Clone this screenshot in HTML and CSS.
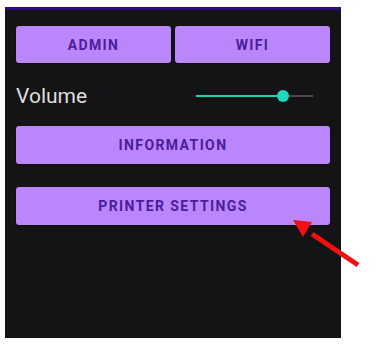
FILE: index.html
```html
<!DOCTYPE html>
<html>
<head>
<meta charset="utf-8">
<link rel="stylesheet" href="styles.css">
</head>
<body>
<div class="stage">
  <div class="panel">
    <div class="row-2">
      <button class="btn">ADMIN</button>
      <button class="btn">WIFI</button>
    </div>
    <div class="volume-row">
      <span class="label">Volume</span>
      <div class="slider">
        <div class="track-active"></div>
        <div class="thumb"></div>
        <div class="track-rest"></div>
      </div>
    </div>
    <button class="btn btn-wide info">INFORMATION</button>
    <button class="btn btn-wide printer">PRINTER SETTINGS</button>
  </div>
  <svg class="arrow" width="80" height="60" viewBox="0 0 80 60">
    <line x1="68" y1="50" x2="22" y2="19" stroke="#f01010" stroke-width="5" stroke-linecap="butt"/>
    <polygon points="3,5 22,7 13,22" fill="#f01010"/>
  </svg>
</div>
</body>
</html>
```
FILE: styles.css
```css
html, body {
  margin: 0;
  padding: 0;
  background: #ffffff;
}
.stage {
  position: relative;
  width: 383px;
  height: 348px;
  padding: 7px 0 0 5px;
  box-sizing: border-box;
}
.panel {
  width: 336px;
  height: 331px;
  box-sizing: border-box;
  background: #141315;
  border-top: 3px solid #2e0a7c;
  padding: 16px 11px 0 11px;
  display: flex;
  flex-direction: column;
  font-family: Roboto, "Liberation Sans", sans-serif;
}
.row-2 {
  display: flex;
  gap: 4px;
}
.btn {
  flex: 1;
  height: 37px;
  border: none;
  border-radius: 3px;
  background: #bb86fc;
  color: #4a1d9a;
  font-family: Roboto, "Liberation Sans", sans-serif;
  font-weight: 700;
  font-size: 14px;
  letter-spacing: 1.4px;
  padding: 0;
  box-shadow: 0 1px 2px rgba(0,0,0,0.5);
}
.btn-wide {
  flex: none;
  width: 100%;
  height: 38px;
}
.volume-row {
  display: flex;
  align-items: center;
  height: 40px;
  margin-top: 13px;
}
.label {
  color: #dedede;
  font-size: 21px;
  padding-left: 0;
}
.slider {
  margin-left: auto;
  margin-right: 17px;
  width: 117px;
  height: 14px;
  display: flex;
  align-items: center;
}
.track-active {
  width: 81px;
  height: 2px;
  background: #22d3b3;
}
.thumb {
  width: 12px;
  height: 12px;
  border-radius: 50%;
  background: #1fd8bc;
  flex: none;
}
.track-rest {
  flex: 1;
  height: 2px;
  background: #4a4a4a;
}
.info {
  margin-top: 10px;
}
.printer {
  margin-top: 23px;
}
.arrow {
  position: absolute;
  left: 290px;
  top: 215px;
}
```
